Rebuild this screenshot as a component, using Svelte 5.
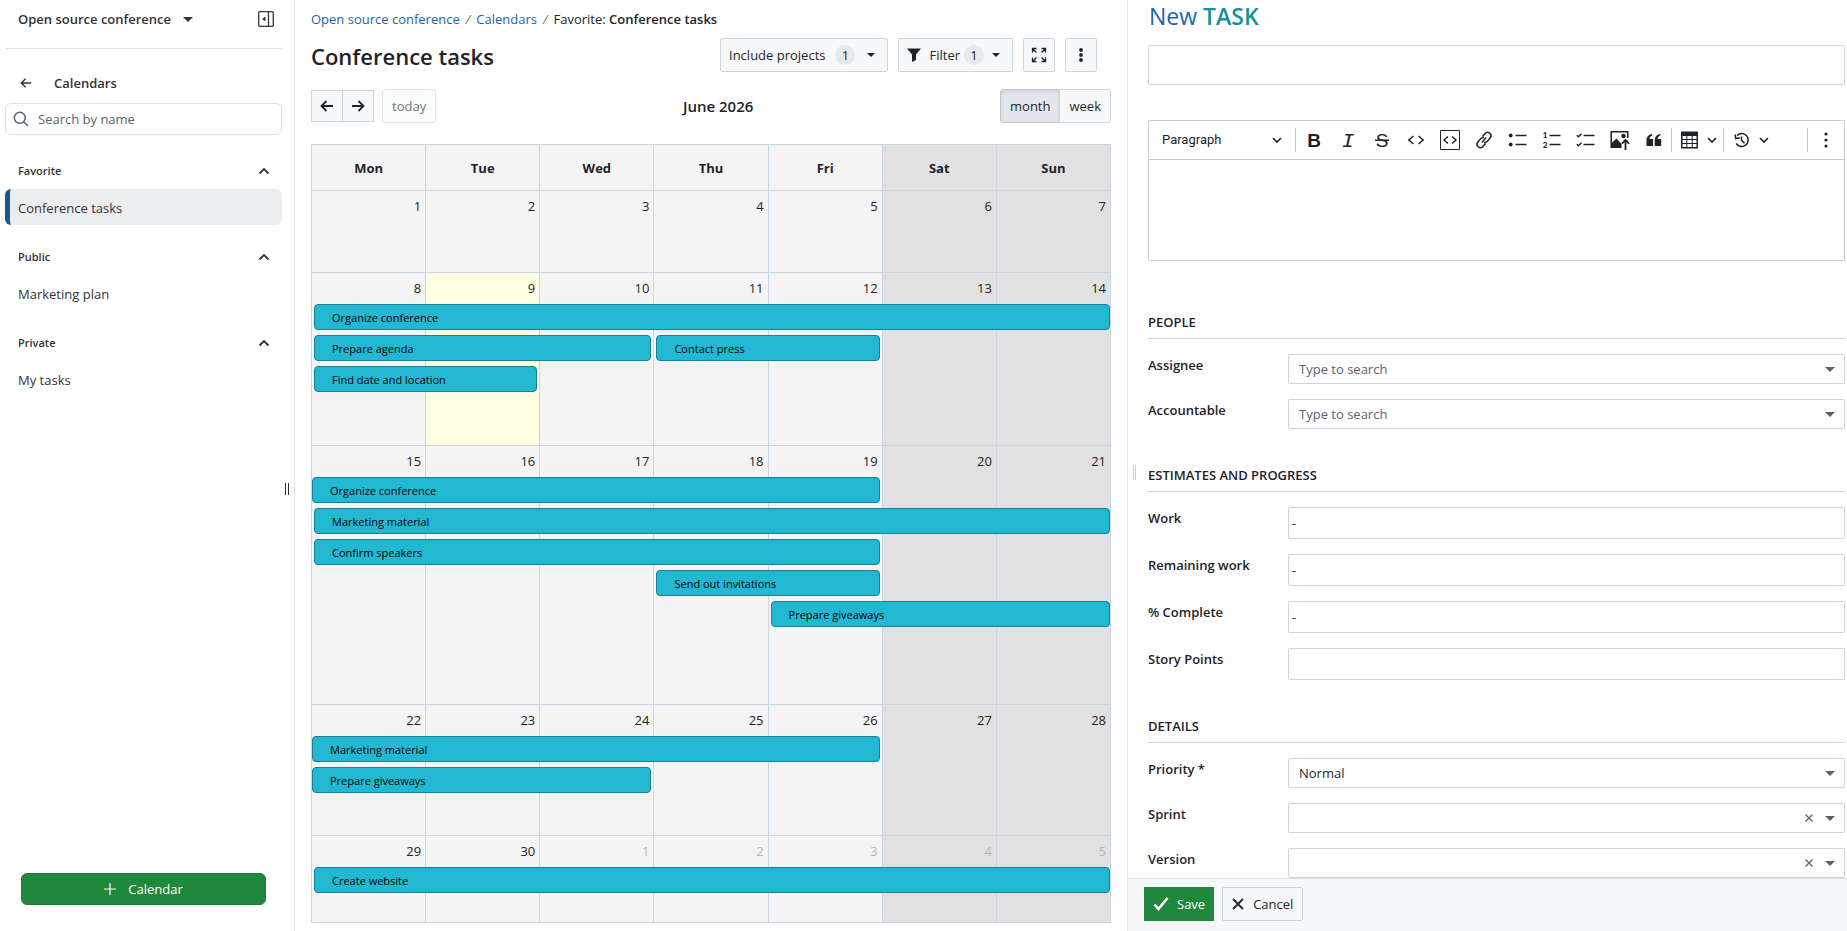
<script>
  const days = ['Mon', 'Tue', 'Wed', 'Thu', 'Fri', 'Sat', 'Sun'];

  const weeks = [
    { first: 1, lanes: [] },
    {
      first: 8,
      lanes: [
        [{ title: 'Organize conference', day: 0, span: 7, start: true, end: false }],
        [
          { title: 'Prepare agenda', day: 0, span: 3, start: true, end: true },
          { title: 'Contact press', day: 3, span: 2, start: true, end: true }
        ],
        [{ title: 'Find date and location', day: 0, span: 2, start: true, end: true }]
      ]
    },
    {
      first: 15,
      lanes: [
        [{ title: 'Organize conference', day: 0, span: 5, start: false, end: true }],
        [{ title: 'Marketing material', day: 0, span: 7, start: true, end: false }],
        [{ title: 'Confirm speakers', day: 0, span: 5, start: true, end: true }],
        [{ title: 'Send out invitations', day: 3, span: 2, start: true, end: true }],
        [{ title: 'Prepare giveaways', day: 4, span: 3, start: true, end: false }]
      ]
    },
    {
      first: 22,
      lanes: [
        [{ title: 'Marketing material', day: 0, span: 5, start: false, end: true }],
        [{ title: 'Prepare giveaways', day: 0, span: 3, start: false, end: true }]
      ]
    },
    {
      first: 29,
      lanes: [[{ title: 'Create website', day: 0, span: 7, start: true, end: false }]]
    }
  ];

  const today = 9;
  const monthLength = 30;

  const dayNumber = (n) => (n > monthLength ? n - monthLength : n);

  function barWidth(e) {
    const trim = (e.start ? 2 : 0) + (e.end ? 2 : 0);
    return `calc(${e.span * 100}% + ${e.span - 1 - trim}px)`;
  }

  const menu = [
    { heading: 'Favorite', items: [{ label: 'Conference tasks', active: true }] },
    { heading: 'Public', items: [{ label: 'Marketing plan' }] },
    { heading: 'Private', items: [{ label: 'My tasks' }] }
  ];

  const sections = [
    {
      title: 'People',
      fields: [
        { id: 'assignee', label: 'Assignee', kind: 'select', value: 'Type to search', empty: true },
        { id: 'accountable', label: 'Accountable', kind: 'select', value: 'Type to search', empty: true }
      ]
    },
    {
      title: 'Estimates and progress',
      fields: [
        { id: 'work', label: 'Work', kind: 'text', value: '-' },
        { id: 'remaining', label: 'Remaining work', kind: 'text', value: '-' },
        { id: 'complete', label: '% Complete', kind: 'text', value: '-' },
        { id: 'points', label: 'Story Points', kind: 'text', value: '' }
      ]
    },
    {
      title: 'Details',
      fields: [
        { id: 'priority', label: 'Priority *', kind: 'select', value: 'Normal' },
        { id: 'sprint', label: 'Sprint', kind: 'select', value: '', clearable: true },
        { id: 'version', label: 'Version', kind: 'select', value: '', clearable: true }
      ]
    }
  ];
</script>

{#snippet caret(size)}
  <svg width={size} height={size / 2} viewBox="0 0 10 5" aria-hidden="true"><path d="M0 0h10L5 5z" fill="currentColor" /></svg>
{/snippet}

{#snippet chevronDown()}
  <svg width="10" height="10" viewBox="0 0 10 10" fill="none" stroke="currentColor" stroke-width="1.6" aria-hidden="true"><path d="M1 3l4 4 4-4" /></svg>
{/snippet}

{#snippet arrowLeft(size, weight)}
  <svg width={size} height={size} viewBox="0 0 14 14" fill="none" stroke="currentColor" stroke-width={weight} aria-hidden="true"><path d="M13 7H2M6.500 2L1.500 7l5 5" /></svg>
{/snippet}

<div class="app">
  <aside class="sidebar">
    <header class="project">
      <button class="plain project-name">Open source conference {@render caret(10)}</button>
      <button class="plain" aria-label="Collapse menu">
        <svg width="16" height="16" viewBox="0 0 16 16" fill="none" stroke="currentColor" stroke-width="1.3" aria-hidden="true">
          <rect x=".7" y=".7" width="14.600" height="14.600" rx="1" />
          <path d="M10.500 1v14" />
          <path d="M7.500 5.500v5L4 8z" fill="currentColor" stroke="none" />
        </svg>
      </button>
    </header>

    <div class="back">
      <button class="plain" aria-label="Back">{@render arrowLeft(12, 1.6)}</button>
      <span>Calendars</span>
    </div>

    <label class="search">
      <svg width="16" height="16" viewBox="0 0 16 16" fill="none" stroke="currentColor" stroke-width="1.500" aria-hidden="true">
        <circle cx="6.800" cy="6.800" r="5.500" /><path d="M11 11l4 4" />
      </svg>
      <input type="text" placeholder="Search by name" aria-label="Search by name" />
    </label>

    <nav>
      {#each menu as group}
        <section>
          <button class="plain group">
            <span>{group.heading}</span>
            <svg width="12" height="8" viewBox="0 0 12 8" fill="none" stroke="currentColor" stroke-width="1.800" aria-hidden="true"><path d="M1.500 6.500L6 2l4.500 4.500" /></svg>
          </button>
          {#each group.items as item}
            <a class="item" class:active={item.active} href="#calendar">{item.label}</a>
          {/each}
        </section>
      {/each}
    </nav>

    <button class="create">
      <svg width="12" height="12" viewBox="0 0 12 12" stroke="currentColor" stroke-width="1.200" aria-hidden="true"><path d="M6 0v12M0 6h12" /></svg>
      Calendar
    </button>
    <span class="grip"></span>
  </aside>

  <main>
    <nav class="crumbs">
      <a href="#project">Open source conference</a><i>/</i><a href="#calendars">Calendars</a><i>/</i><span>Favorite: <b>Conference tasks</b></span>
    </nav>

    <div class="title-row">
      <h1>Conference tasks</h1>
      <div class="actions">
        <button class="btn include">Include projects <span class="count">1</span> {@render caret(8)}</button>
        <button class="btn filter">
          <svg width="14" height="14" viewBox="0 0 14 14" aria-hidden="true"><path d="M0 .5h14L9 6.500v5.500l-4 2v-7.500z" fill="currentColor" /></svg>
          <span>Filter</span> <span class="count">1</span> {@render caret(8)}
        </button>
        <button class="btn square" aria-label="Full screen">
          <svg width="16" height="16" viewBox="0 0 16 16" fill="none" stroke="currentColor" stroke-width="1.300" aria-hidden="true">
            <path d="M5.500 1.500h-4v4M1.500 1.500l4 4M10.500 1.500h4v4M14.500 1.500l-4 4M5.500 14.500h-4v-4M1.500 14.500l4-4M10.500 14.500h4v-4M14.500 14.500l-4-4" />
          </svg>
        </button>
        <button class="btn square" aria-label="More">
          <svg width="4" height="14" viewBox="0 0 4 14" fill="currentColor" aria-hidden="true"><circle cx="2" cy="2" r="1.900" /><circle cx="2" cy="7" r="1.900" /><circle cx="2" cy="12" r="1.900" /></svg>
        </button>
      </div>
    </div>

    <div class="cal-head">
      <div class="cal-nav">
        <div class="pair">
          <button aria-label="Previous month">{@render arrowLeft(14, 1.800)}</button>
          <button class="next" aria-label="Next month">{@render arrowLeft(14, 1.800)}</button>
        </div>
        <button class="today" disabled>today</button>
      </div>
      <h2>June 2026</h2>
      <div class="views">
        <button class="on">month</button>
        <button>week</button>
      </div>
    </div>

    <div class="cal">
      <table>
        <thead>
          <tr>
            {#each days as d, i}<th class:weekend={i > 4}>{d}</th>{/each}
          </tr>
        </thead>
        <tbody>
          {#each weeks as week}
            <tr>
              {#each days as _, i}
                {@const n = week.first + i}
                <td class:weekend={i > 4} class:now={n === today}>
                  <div class="num" class:other={n > monthLength}>{dayNumber(n)}</div>
                  {#each week.lanes as lane}
                    <div class="lane">
                      {#each lane.filter((e) => e.day === i) as e}
                        <a class="event" class:start={e.start} href="#task" style="width: {barWidth(e)}">{e.title}</a>
                      {/each}
                    </div>
                  {/each}
                </td>
              {/each}
            </tr>
          {/each}
        </tbody>
      </table>
    </div>
  </main>

  <form class="panel" onsubmit={(e) => e.preventDefault()}>
    <div class="scroll">
      <h2 class="new">New <b>TASK</b></h2>
      <input class="subject" type="text" aria-label="Subject" />

      <div class="editor">
        <div class="tools">
          <div class="para">
            <select aria-label="Heading"><option>Paragraph</option></select>
            {@render chevronDown()}
          </div>
          <span class="sep"></span>
          <button type="button" aria-label="Bold">
            <svg viewBox="0 0 20 20"><text x="10" y="17" text-anchor="middle" font-family="Liberation Sans" font-weight="700" font-size="19">B</text></svg>
          </button>
          <button type="button" aria-label="Italic">
            <svg viewBox="0 0 20 20"><text x="10" y="17" text-anchor="middle" font-family="Liberation Mono" font-style="italic" font-size="21">I</text></svg>
          </button>
          <button type="button" aria-label="Strikethrough">
            <svg viewBox="0 0 20 20"><text x="10" y="17" text-anchor="middle" font-family="Liberation Sans" font-size="19">S</text><path class="line" d="M3 10.200h14" /></svg>
          </button>
          <button type="button" aria-label="Code">
            <svg viewBox="0 0 20 20"><path class="line" d="M7.500 6L2.800 10l4.700 4M12.500 6l4.700 4-4.700 4" /></svg>
          </button>
          <button type="button" aria-label="Code block">
            <svg viewBox="0 0 20 20"><path class="thin" d="M.5.5h19v19H.5z" /><path class="line" d="M8 6.500L4 10l4 3.500M12 6.500l4 3.500-4 3.500" /></svg>
          </button>
          <button type="button" aria-label="Link">
            <svg viewBox="0 0 20 20"><path class="line" d="M8.500 6.500l2.600-3a3.300 3.300 0 0 1 5 4.400l-3 3.500a3.300 3.300 0 0 1-3 1M11.500 13.500l-2.600 3a3.300 3.300 0 0 1-5-4.400l3-3.500a3.300 3.300 0 0 1 3-1M8 12.500l4-5" /></svg>
          </button>
          <button type="button" aria-label="Bulleted list">
            <svg viewBox="0 0 20 20"><circle cx="2.700" cy="5.500" r="1.900" /><circle cx="2.700" cy="14.500" r="1.900" /><path class="line" d="M7.500 5.500h11M7.500 14.500h11" /></svg>
          </button>
          <button type="button" aria-label="Numbered list">
            <svg viewBox="0 0 20 20"><text x="3" y="8" text-anchor="middle" font-family="Lato" font-weight="900" font-size="8">1</text><text x="3" y="18" text-anchor="middle" font-family="Lato" font-weight="900" font-size="8">2</text><path class="line" d="M7.500 5.500h11M7.500 14.500h11" /></svg>
          </button>
          <button type="button" aria-label="To-do list">
            <svg viewBox="0 0 20 20"><path class="line" d="M.8 5.300l1.700 1.500 3-3M.8 14.300l1.700 1.500 3-3M7.500 5.500h11M7.500 14.500h11" /></svg>
          </button>
          <button type="button" aria-label="Insert image">
            <svg viewBox="0 0 20 20"><path class="line" d="M11.500 17.300H1.200V1.700h16.600V8" /><circle cx="13.500" cy="6" r="2.200" /><path d="M1.500 13l5-4.500 5 5.500v3h-10zM15.500 8.500l4.300 4.700-1.300 1.100-2.100-2.100V20h-1.800v-7.800l-2.100 2.100-1.300-1.100z" /></svg>
          </button>
          <button type="button" aria-label="Block quote">
            <svg viewBox="0 0 20 20"><path d="M2.500 10.500C2.500 7 4.700 4.500 8 4l.3 1.500C6.500 6 5.500 7.300 5.500 9H9v7H2.500zM10.700 10.500c0-3.500 2.200-6 5.500-6.500l.3 1.500c-1.800.5-2.800 1.800-2.800 3.500h3.500v7h-6.500z" /></svg>
          </button>
          <span class="sep"></span>
          <button type="button" aria-label="Insert table">
            <svg viewBox="0 0 20 20"><path class="line" d="M1.800 2.300h15.400v15.400H1.800z" /><path d="M1.500 2h16v4h-16z" /><path class="thin" d="M1.500 9.500h16M1.500 13.500h16M6.800 5v13M12.200 5v13" /></svg>
          </button>
          <button type="button" class="drop" aria-label="Table options">{@render chevronDown()}</button>
          <span class="sep"></span>
          <button type="button" aria-label="Local modifications">
            <svg viewBox="0 0 20 20"><path class="line" d="M5 5.500a6.500 6.500 0 1 1-.8 8M3 4.500l.8 4 4-.8M9.500 6.500v3.700l3 3" /></svg>
          </button>
          <button type="button" class="drop" aria-label="History options">{@render chevronDown()}</button>
          <span class="sep last"></span>
          <button type="button" aria-label="More tools">
            <svg viewBox="0 0 20 20"><circle cx="10" cy="4" r="1.600" /><circle cx="10" cy="10" r="1.600" /><circle cx="10" cy="16" r="1.600" /></svg>
          </button>
        </div>
        <textarea aria-label="Description"></textarea>
      </div>

      {#each sections as s}
        <section class="fields">
          <h3>{s.title}</h3>
          {#each s.fields as f}
            <div class="field">
              <label for={f.id}>{f.label}</label>
              {#if f.kind === 'select'}
                <div class="combo">
                  <select id={f.id} class:empty={f.empty}><option>{f.value}</option></select>
                  {#if f.clearable}
                    <button type="button" class="clear" aria-label="Clear {f.label}">
                      <svg width="8" height="8" viewBox="0 0 8 8" stroke="currentColor" stroke-width="1.300" aria-hidden="true"><path d="M.5.5l7 7M7.500.5l-7 7" /></svg>
                    </button>
                  {/if}
                  <span class="arrow">{@render caret(10)}</span>
                </div>
              {:else}
                <input id={f.id} type="text" value={f.value} />
              {/if}
            </div>
          {/each}
        </section>
      {/each}
    </div>

    <footer>
      <button class="save">
        <svg width="16" height="14" viewBox="0 0 16 14" fill="none" stroke="currentColor" stroke-width="2.600" aria-hidden="true"><path d="M1.500 7.500l4 4.500 9-11" /></svg>
        Save
      </button>
      <button type="button" class="btn cancel">
        <svg width="12" height="12" viewBox="0 0 12 12" stroke="currentColor" stroke-width="1.800" aria-hidden="true"><path d="M1 1l10 10M11 1L1 11" /></svg>
        Cancel
      </button>
    </footer>
    <span class="grip"></span>
  </form>
</div>

<style>
  :global(body) {
    background: #fff;
  }

  .app {
    --line: #cbd5e0;
    --green: #1f883d;
    display: grid;
    grid-template-columns: 295px minmax(0, 1fr) 720px;
    height: 100vh;
    overflow: hidden;
    color: #1f2328;
    font: 13px/20px 'Open Sans', 'Noto Sans', sans-serif;
  }

  button,
  input,
  select,
  textarea {
    box-sizing: border-box;
    margin: 0;
    padding: 0;
    font: inherit;
    color: inherit;
  }

  button {
    display: inline-flex;
    align-items: center;
    justify-content: center;
    cursor: pointer;
  }

  svg {
    flex: none;
    display: block;
  }

  h1,
  h2,
  h3 {
    margin: 0;
    font-weight: 600;
  }

  a {
    text-decoration: none;
  }

  b {
    font-weight: 600;
  }

  .plain {
    border: 0;
    background: none;
  }

  .grip {
    position: absolute;
    width: 1px;
    margin-top: -1px;
    border: solid #333;
    border-width: 0 1px;
  }

  /* Sidebar */
  .sidebar {
    position: relative;
    display: flex;
    flex-direction: column;
    padding: 0 12px 0 5px;
    border-right: 1px solid #e1e4e8;
    color: #333;
  }

  .sidebar .grip {
    right: 5px;
    top: 52%;
    height: 12px;
    width: 2px;
  }

  .project {
    display: flex;
    justify-content: space-between;
    align-items: center;
    padding: 0 8px 10px 13px;
    height: 38px;
    border-bottom: 1px solid #d8e0e8;
  }

  .project-name {
    gap: 12px;
    font-weight: 600;
  }

  .back {
    display: flex;
    align-items: center;
    gap: 22px;
    padding: 24px 0 10px 15px;
    font-weight: 600;
  }

  .search {
    display: flex;
    align-items: center;
    gap: 9px;
    height: 32px;
    box-sizing: border-box;
    padding: 0 7px;
    border: 1px solid #d8e0e8;
    border-radius: 6px;
    color: #59636e;
  }

  .search input {
    flex: 1;
    min-width: 0;
    border: 0;
    background: none;
  }

  .search input::placeholder {
    color: #59636e;
    opacity: 1;
  }

  .sidebar nav {
    display: flex;
    flex-direction: column;
    gap: 14px;
    padding-top: 18px;
    flex: 1;
  }

  .group {
    display: flex;
    width: 100%;
    justify-content: space-between;
    height: 36px;
    padding: 0 12px 0 13px;
    font-size: 11px;
    font-weight: 600;
  }

  .item {
    display: block;
    padding: 9px 13px 7px;
    border-radius: 6px;
    color: #333;
  }

  .item.active {
    padding-left: 8px;
    border-left: 5px solid #175a8e;
    background: #ecedef;
  }

  .create {
    gap: 12px;
    height: 32px;
    margin: 0 16px 26px;
    border: 1px solid #1c7a37;
    border-radius: 6px;
    background: var(--green);
    color: #fff;
  }

  /* Calendar */
  main {
    display: flex;
    flex-direction: column;
    min-width: 0;
    padding: 9px 16px 8px;
  }

  .crumbs a {
    color: #1a67a3;
  }

  .crumbs i {
    margin: 0 6px;
    color: #6e7781;
  }

  .title-row {
    display: flex;
    justify-content: space-between;
    align-items: center;
    margin-top: 8px;
    padding-right: 14px;
  }

  h1 {
    padding-top: 2px;
    font-size: 22px;
    line-height: 34px;
  }

  .actions {
    display: flex;
    gap: 10px;
  }

  .btn {
    gap: 8px;
    height: 34px;
    padding: 0 8px;
    border: 1px solid var(--line);
    border-radius: 2px;
    background: #f6f8fa;
  }

  .include {
    padding-right: 12px;
    gap: 10px;
  }

  .include .count {
    margin-right: 2px;
  }

  .filter {
    padding-right: 12px;
  }

  .filter .count {
    margin-left: -4px;
  }

  .square {
    width: 32px;
    padding: 0;
  }

  .count {
    width: 20px;
    height: 20px;
    border-radius: 10px;
    background: #e6eaed;
    text-align: center;
  }

  .cal-head {
    display: flex;
    justify-content: space-between;
    align-items: center;
    margin: 16px 0 21px;
  }

  .cal-nav {
    display: flex;
    align-items: center;
    gap: 8px;
  }

  .cal-head h2 {
    font-size: 15px;
    line-height: 34px;
  }

  .pair,
  .views {
    display: flex;
  }

  .cal-head button {
    border: 1px solid var(--line);
    background: #f7f8f9;
  }

  .pair button {
    width: 32px;
    height: 32px;
  }

  .pair .next {
    margin-left: -1px;
  }

  .next :global(svg) {
    transform: scaleX(-1);
  }

  .today,
  .views button {
    height: 34px;
    padding: 0 9px;
  }

  .cal-head .today {
    border-color: #e2e6ea;
    border-radius: 3px;
    background: #fafbfb;
    color: #777;
  }

  .views button {
    border-radius: 0 3px 3px 0;
  }

  .cal-head .views .on {
    margin-right: -1px;
    border-color: #c4c8cc;
    border-radius: 3px 0 0 3px;
    background: #e4e8ed;
    box-shadow: inset 0 2px 4px rgb(0 0 0 / 10%);
  }

  .cal {
    flex: 1;
    min-height: 0;
  }

  table {
    width: 100%;
    height: 100%;
    table-layout: fixed;
    border-collapse: collapse;
  }

  th,
  td {
    padding: 0;
    border: 1px solid var(--line);
    background: #f4f4f4;
  }

  th {
    height: 45px;
    font-weight: 700;
  }

  td {
    vertical-align: top;
  }

  .weekend {
    background: #e1e1e1;
  }

  .now {
    background: #ffffe3;
  }

  .num {
    height: 31px;
    padding-right: 4px;
    text-align: right;
    line-height: 31px;
  }

  .num:last-child {
    padding-bottom: 27px;
  }

  .other {
    color: #b4b6b8;
  }

  .lane {
    height: 26px;
    margin-bottom: 5px;
  }

  .event {
    position: relative;
    z-index: 1;
    display: block;
    box-sizing: border-box;
    height: 26px;
    padding-left: 17px;
    border: 1px solid #1a7f90;
    border-radius: 4px;
    background: #22b8d1;
    color: #000;
    font-size: 11px;
    line-height: 26px;
    white-space: nowrap;
  }

  .event.start {
    margin-left: 2px;
  }

  /* Task form */
  .panel {
    position: relative;
    display: flex;
    flex-direction: column;
    min-width: 0;
    min-height: 0;
    border-left: 1px solid #e1e4e8;
  }

  .panel .grip {
    left: 5px;
    top: 50%;
    height: 15px;
    border-color: #ccc;
  }

  .scroll {
    flex: 1;
    min-height: 0;
    overflow: hidden;
    padding: 0 2px 0 20px;
  }

  .new {
    padding-left: 1px;
    color: #1a67a3;
    font-size: 23px;
    font-weight: 400;
    line-height: 33px;
  }

  .new b {
    color: #178f9f;
  }

  .panel input {
    display: block;
    border: 1px solid var(--line);
    border-radius: 2px;
    background: #fff;
  }

  .panel .subject {
    width: 100%;
    height: 40px;
    margin-top: 12px;
  }

  .editor {
    margin-top: 35px;
    border: 1px solid #c8cbd0;
    border-radius: 2px;
  }

  .tools {
    display: flex;
    align-items: center;
    height: 38px;
    padding-right: 1px;
    border-bottom: 1px solid #c8cbd0;
  }

  .tools button {
    width: 34px;
    height: 32px;
    border: 0;
    background: none;
  }

  .tools button > svg:not([width]) {
    width: 20px;
    height: 20px;
    overflow: visible;
    fill: currentColor;
  }

  .tools .line {
    fill: none;
    stroke: currentColor;
    stroke-width: 1.5;
  }

  .tools .thin {
    fill: none;
    stroke: currentColor;
    stroke-width: 1;
  }

  .tools .drop {
    width: 14px;
    margin: 0 4px 0 -2px;
  }

  .para {
    display: grid;
    grid-template-columns: 1fr 10px;
    align-items: center;
    width: 120px;
    padding: 0 13px;
  }

  .para select {
    width: 100%;
    border: 0;
    appearance: none;
    background: none;
    font-family: Roboto, sans-serif;
  }

  .sep {
    width: 1px;
    height: 24px;
    margin-right: 1px;
    background: #c8cbd0;
  }

  .last {
    margin-left: auto;
  }

  textarea {
    display: block;
    width: 100%;
    height: 100px;
    border: 0;
    resize: none;
  }

  .fields {
    margin-top: 31px;
  }

  .editor + .fields {
    margin-top: 46px;
  }

  h3 {
    padding: 5px 0 6px;
    margin-bottom: 15px;
    border-bottom: 1px solid var(--line);
    font-size: 13px;
    line-height: 20px;
    text-transform: uppercase;
  }

  .field {
    display: grid;
    grid-template-columns: 140px 1fr;
    margin-bottom: 15px;
  }

  .field label {
    padding-top: 1px;
    font-weight: 600;
  }

  .field input {
    height: 32px;
    padding: 0 3px;
  }

  .combo {
    position: relative;
  }

  .combo select {
    display: block;
    width: 100%;
    height: 30px;
    padding: 0 10px;
    border: 1px solid var(--line);
    border-radius: 2px;
    appearance: none;
    background: #fff;
  }

  .combo .empty {
    color: #59636e;
  }

  .arrow,
  .clear {
    position: absolute;
    right: 10px;
    top: 13px;
    color: #59636e;
    pointer-events: none;
  }

  .clear {
    right: 32px;
    top: 11px;
    border: 0;
    background: none;
    pointer-events: auto;
  }

  footer {
    display: flex;
    gap: 8px;
    padding: 8px 16px 10px;
    border-top: 1px solid #d8e0e8;
    background: #f6f8fa;
  }

  .save {
    gap: 8px;
    height: 34px;
    padding: 0 9px;
    border: 0;
    background: var(--green);
    color: #fff;
  }

  .cancel {
    padding: 0 9px;
    gap: 9px;
  }
</style>
